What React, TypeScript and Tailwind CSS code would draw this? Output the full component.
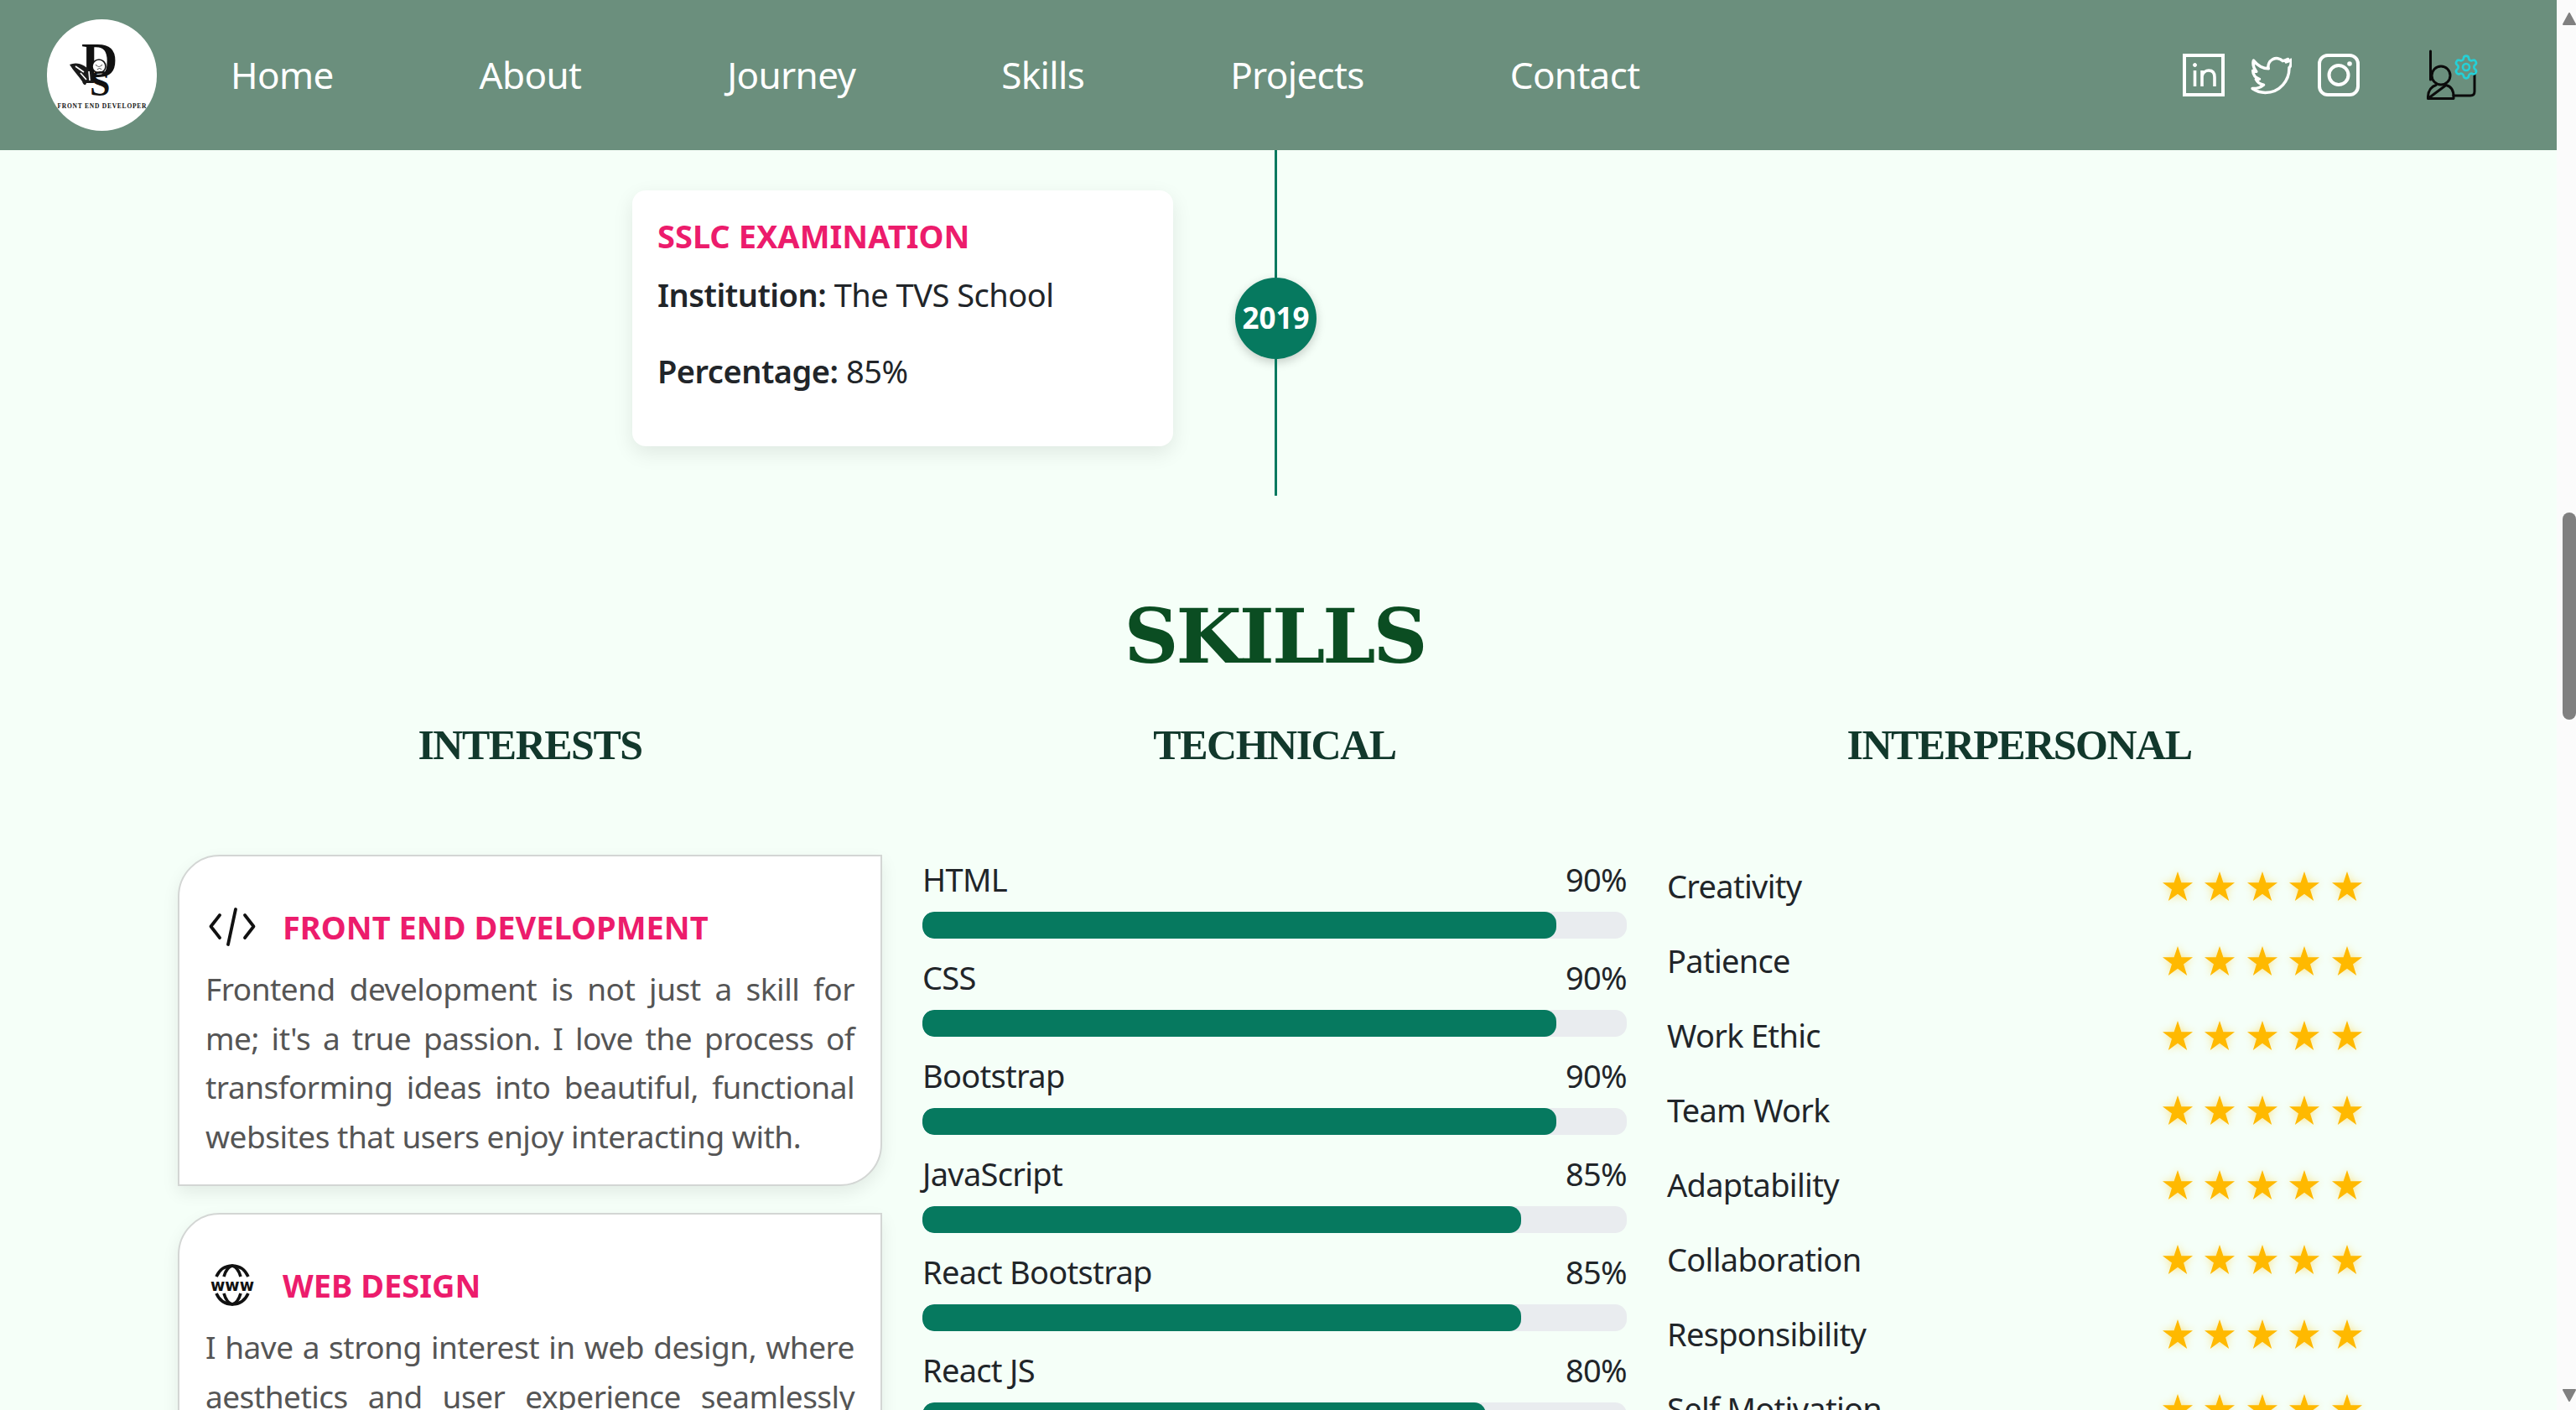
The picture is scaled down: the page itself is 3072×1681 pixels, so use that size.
import React from 'react';
import { Settings } from 'lucide-react';

const navLinks = ['Home', 'About', 'Journey', 'Skills', 'Projects', 'Contact'];

const technical = [
  { name: 'HTML', level: 90 },
  { name: 'CSS', level: 90 },
  { name: 'Bootstrap', level: 90 },
  { name: 'JavaScript', level: 85 },
  { name: 'React Bootstrap', level: 85 },
  { name: 'React JS', level: 80 },
];

const interpersonal = [
  'Creativity',
  'Patience',
  'Work Ethic',
  'Team Work',
  'Adaptability',
  'Collaboration',
  'Responsibility',
  'Self Motivation',
];

const Logo = () => (
  <div className="w-[131px] h-[133px] rounded-full bg-white overflow-hidden shrink-0">
    <svg viewBox="0 0 131 133" className="w-full h-full">
      <text x="41" y="69" fontFamily="'Liberation Serif', serif" fontWeight="700" fontSize="60" fill="#111">D</text>
      <path d="M27 54 C36 50 46 54 54 64 L56 76 L47 76 C46 80 43 78 42 74 C38 68 32 62 27 54 Z" fill="#1a1a1a" />
      <path d="M34 56 L44 63 M40 64 L47 72 M50 62 L51 73" stroke="#fff" strokeWidth="1.6" fill="none" />
      <circle cx="62" cy="56" r="8" fill="#fff" stroke="#111" strokeWidth="1.6" />
      <path d="M58 54 Q62 59 66 54 M60 60 Q63 57 65 60" stroke="#666" strokeWidth="1.2" fill="none" />
      <text x="51" y="91" fontFamily="'Liberation Serif', serif" fontWeight="700" fontSize="44" fill="#111">S</text>
      <text x="65.5" y="106" textLength="106" lengthAdjust="spacing" textAnchor="middle" fontFamily="'Liberation Serif', serif" fontWeight="700" fontSize="7.5" fill="#111">FRONT END DEVELOPER</text>
    </svg>
  </div>
);

const LinkedinIcon = () => (
  <svg viewBox="0 0 50 51" className="w-[50px] h-[51px]" fill="none" stroke="#fff">
    <rect x="2" y="2" width="46" height="47" strokeWidth="4" />
    <circle cx="14.5" cy="13.5" r="2" fill="#fff" strokeWidth="1" />
    <path d="M14.5 20V39" strokeWidth="3.6" />
    <path d="M23 20V39M23 27C24 22 28 20 31 20C36 20 38 23 38 28V39" strokeWidth="3.6" />
  </svg>
);

const TwitterIcon = () => (
  <svg viewBox="0 0 24 24" className="w-[49px] h-[50px]" fill="none" stroke="#fff" strokeWidth="1.7" strokeLinejoin="round">
    <path d="M23.2 3.2l-2.5 .9c.5-.6 .8-1.2 1-1.7c-.9 .5-1.9 .9-3 1.1a4.9 4.9 0 0 0 -8.3 4.5C7.2 8 4.1 6.100 1.700 3.200c-.8 2.800 .3 4.800 1.600 6.500c-.8 0-1.400-.2-2-.5c.1 2.400 1.700 4.200 3.800 4.900c-.6 .2-1.300 .2-2 .1c.9 1.800 2.600 3 4.500 3.300c-1.800 1.500-4 2.200-6.600 2.100c2.200 1.500 4.800 2.400 7.500 2.400c9 0 14-7.500 14-14v-.6c.7-.5 1.200-2.500 1.200-4.600z" />
  </svg>
);

const InstagramIcon = () => (
  <svg viewBox="0 0 50 51" className="w-[50px] h-[51px]" fill="none" stroke="#fff">
    <rect x="2" y="2" width="46" height="47" rx="10" strokeWidth="4" />
    <circle cx="25" cy="25.500" r="11.500" strokeWidth="4" />
    <circle cx="38" cy="12" r="2.800" fill="#fff" stroke="none" />
  </svg>
);

const AdminIcon = () => (
  <svg viewBox="0 0 62 62" className="w-[62px] h-[62px]" fill="none" stroke="#0b0b0b" strokeWidth="3" strokeLinecap="round" strokeLinejoin="round">
    <path d="M4.500 2V36" />
    <circle cx="17" cy="31" r="11" />
    <path d="M1.500 58.500C1 48 7 43.500 11 42.500M23 42.500C28 43.500 32.500 48 32 58.500H1.500Z" />
    <path d="M32 55H52C55.500 55 57 53.500 57 50V29" />
    <Settings x={31} y={5} width={32} height={32} stroke="#25d0d6" strokeWidth={2} />
  </svg>
);

const CodeIcon = () => (
  <svg viewBox="0 0 56 46" className="w-[56px] h-[46px]" fill="none" stroke="#111" strokeWidth="3.800" strokeLinecap="round" strokeLinejoin="round">
    <path d="M13 9L2.500 22.500L13 36" />
    <path d="M32 2L23 44" />
    <path d="M43 9L53.500 22.500L43 36" />
  </svg>
);

const WwwIcon = () => (
  <svg viewBox="0 0 56 50" className="w-[56px] h-[50px]" fill="none" stroke="#111" strokeWidth="3.600">
    <path d="M9 15C13 6 19 2 28 2C37 2 43 6 47 15" />
    <path d="M18 15C20 8 24 3 28 2C32 3 36 8 38 15" />
    <path d="M9 35C13 44 19 48 28 48C37 48 43 44 47 35" />
    <path d="M18 35C20 42 24 47 28 48C32 47 36 42 38 35" />
    <text x="28" y="32" textAnchor="middle" textLength="52" lengthAdjust="spacingAndGlyphs" fontFamily="'DejaVu Sans', sans-serif" fontWeight="700" fontSize="20" fill="#111" stroke="none">www</text>
  </svg>
);

const Star = () => (
  <svg viewBox="0 0 36 35" className="w-[36px] h-[35px] drop-shadow-[0_0_5px_rgba(255,193,7,0.45)]">
    <polygon points="18,0 22.400,13.300 36,13.300 25,21.600 29.200,35 18,26.700 6.800,35 11,21.600 0,13.300 13.600,13.300" fill="#ffb900" />
  </svg>
);

const ScrollArrow = ({ down }: { down?: boolean }) => (
  <svg viewBox="0 0 16 15" className="w-[16px] h-[15px]" fill="#808080" stroke="#808080" strokeWidth="2" strokeLinejoin="round">
    <polygon points={down ? '1,1 15,1 8,14' : '8,1 15,14 1,14'} />
  </svg>
);

const InterestCard = ({ icon, title, text }: { icon: React.ReactNode; title: string; text: string }) => (
  <div className="bg-white border-2 border-[#d3d6d4] rounded-tl-[50px] rounded-br-[50px] shadow-[0_8px_20px_rgba(0,0,0,0.08)] pl-[31px] pr-[31px] pb-[28px]">
    <div className="flex items-center gap-[32px] h-[58px] mt-[55px] pl-[4px]">
      <span className="w-[56px] flex justify-center">{icon}</span>
      <h4 className="text-[38px] font-bold text-[#ec1c6c] leading-none">{title}</h4>
    </div>
    <p className="mt-[16px] text-[37px] leading-[58.600px] text-[#555] text-justify tracking-[-0.5px]">{text}</p>
  </div>
);

export default function App() {
  return (
    <div className="flex w-[3072px] h-[1681px] overflow-hidden bg-[#f5fff8] font-['Noto_Sans',sans-serif] text-[#212529]">
      <div className="w-[3049px] flex flex-col shrink-0">
        <header className="h-[179px] shrink-0 bg-[#6b8f7d] flex items-center pl-[56px] pr-[93px]">
          <Logo />
          <nav className="flex gap-[174px] ml-[88px] mb-[2px] text-[44px] text-white tracking-[-0.65px]">
            {navLinks.map((link) => (
              <a key={link}>{link}</a>
            ))}
          </nav>
          <div className="ml-auto flex items-center">
            <div className="flex items-center gap-[31px]">
              <LinkedinIcon />
              <TwitterIcon />
              <InstagramIcon />
            </div>
            <div className="ml-[80px]">
              <AdminIcon />
            </div>
          </div>
        </header>

        {/* journey timeline, last entry only is in view */}
        <section className="ml-[188px] w-[2664px] h-[412px] shrink-0 flex">
          <div className="w-[1285px] shrink-0 flex justify-end pt-[48px]">
            <div className="w-[645px] h-[305px] mr-[74px] bg-white rounded-[16px] shadow-[0_8px_24px_rgba(0,0,0,0.09)] px-[30px] pt-[26px]">
              <h4 className="text-[38px] font-bold text-[#ec1c6c] leading-[56px]">SSLC EXAMINATION</h4>
              <p className="mt-[12px] text-[38px] leading-[60px] tracking-[-0.5px]"><b className="font-semibold">Institution:</b> The TVS School</p>
              <p className="mt-[31px] text-[38px] leading-[60px] tracking-[-0.5px]"><b className="font-semibold">Percentage:</b> 85%</p>
            </div>
          </div>
          <div className="w-[97px] flex flex-col items-center">
            <div className="w-[3px] h-[152px] bg-[#06795f]" />
            <div className="w-[97px] h-[97px] rounded-full bg-[#06795f] text-white font-bold text-[35px] flex items-center justify-center shadow-[0_4px_12px_rgba(0,0,0,0.2)]">2019</div>
            <div className="w-[3px] flex-1 bg-[#06795f]" />
          </div>
        </section>

        <section className="ml-[188px] w-[2664px]">
          <h2 className="mt-[110px] h-[115px] text-center font-['DejaVu_Serif',serif] font-bold text-[90px] leading-[115px] text-[#0b4d22] tracking-[-3px]">SKILLS</h2>
          <div className="mt-[42px] grid grid-cols-3 text-center font-['Liberation_Serif',serif] font-bold text-[50px] leading-[60px] text-[#12382c] tracking-[-1.5px]">
            <h3>INTERESTS</h3>
            <h3>TECHNICAL</h3>
            <h3>INTERPERSONAL</h3>
          </div>

          <div className="mt-[101px] grid grid-cols-3">
            <div className="px-[24px] flex flex-col gap-[32px]">
              <InterestCard
                icon={<CodeIcon />}
                title="FRONT END DEVELOPMENT"
                text="Frontend development is not just a skill for me; it's a true passion. I love the process of transforming ideas into beautiful, functional websites that users enjoy interacting with."
              />
              <InterestCard
                icon={<WwwIcon />}
                title="WEB DESIGN"
                text="I have a strong interest in web design, where aesthetics and user experience seamlessly come together to create engaging websites."
              />
            </div>

            <div className="px-[24px] pt-[3px]">
              {technical.map((skill) => (
                <div key={skill.name} className="h-[117px]">
                  <div className="flex justify-between text-[38px] leading-[52px] tracking-[-0.7px] mb-[13px]">
                    <span>{skill.name}</span>
                    <span>{skill.level}%</span>
                  </div>
                  <div className="h-[32px] rounded-[14px] bg-[#e9ecef] overflow-hidden">
                    <div className="h-full rounded-[14px] bg-[#06795f]" style={{ width: `${skill.level}%` }} />
                  </div>
                </div>
              ))}
            </div>

            <div className="px-[24px] mt-[-7px]">
              {interpersonal.map((trait) => (
                <div key={trait} className="h-[89px] flex items-center justify-between pr-[11px]">
                  <span className="text-[38px] tracking-[-0.7px]">{trait}</span>
                  <span className="flex gap-[14.600px]">
                    <Star />
                    <Star />
                    <Star />
                    <Star />
                    <Star />
                  </span>
                </div>
              ))}
            </div>
          </div>
        </section>
      </div>

      {/* browser scrollbar */}
      <div className="w-[23px] h-full bg-[#fbfbfb] flex flex-col items-end pt-[15px] pb-[10px]">
        <ScrollArrow />
        <div className="w-[16px] h-[247px] mt-[581px] rounded-t-[8px] rounded-b-[8px] bg-[#808080]" />
        <div className="mt-auto">
          <ScrollArrow down />
        </div>
      </div>
    </div>
  );
}
